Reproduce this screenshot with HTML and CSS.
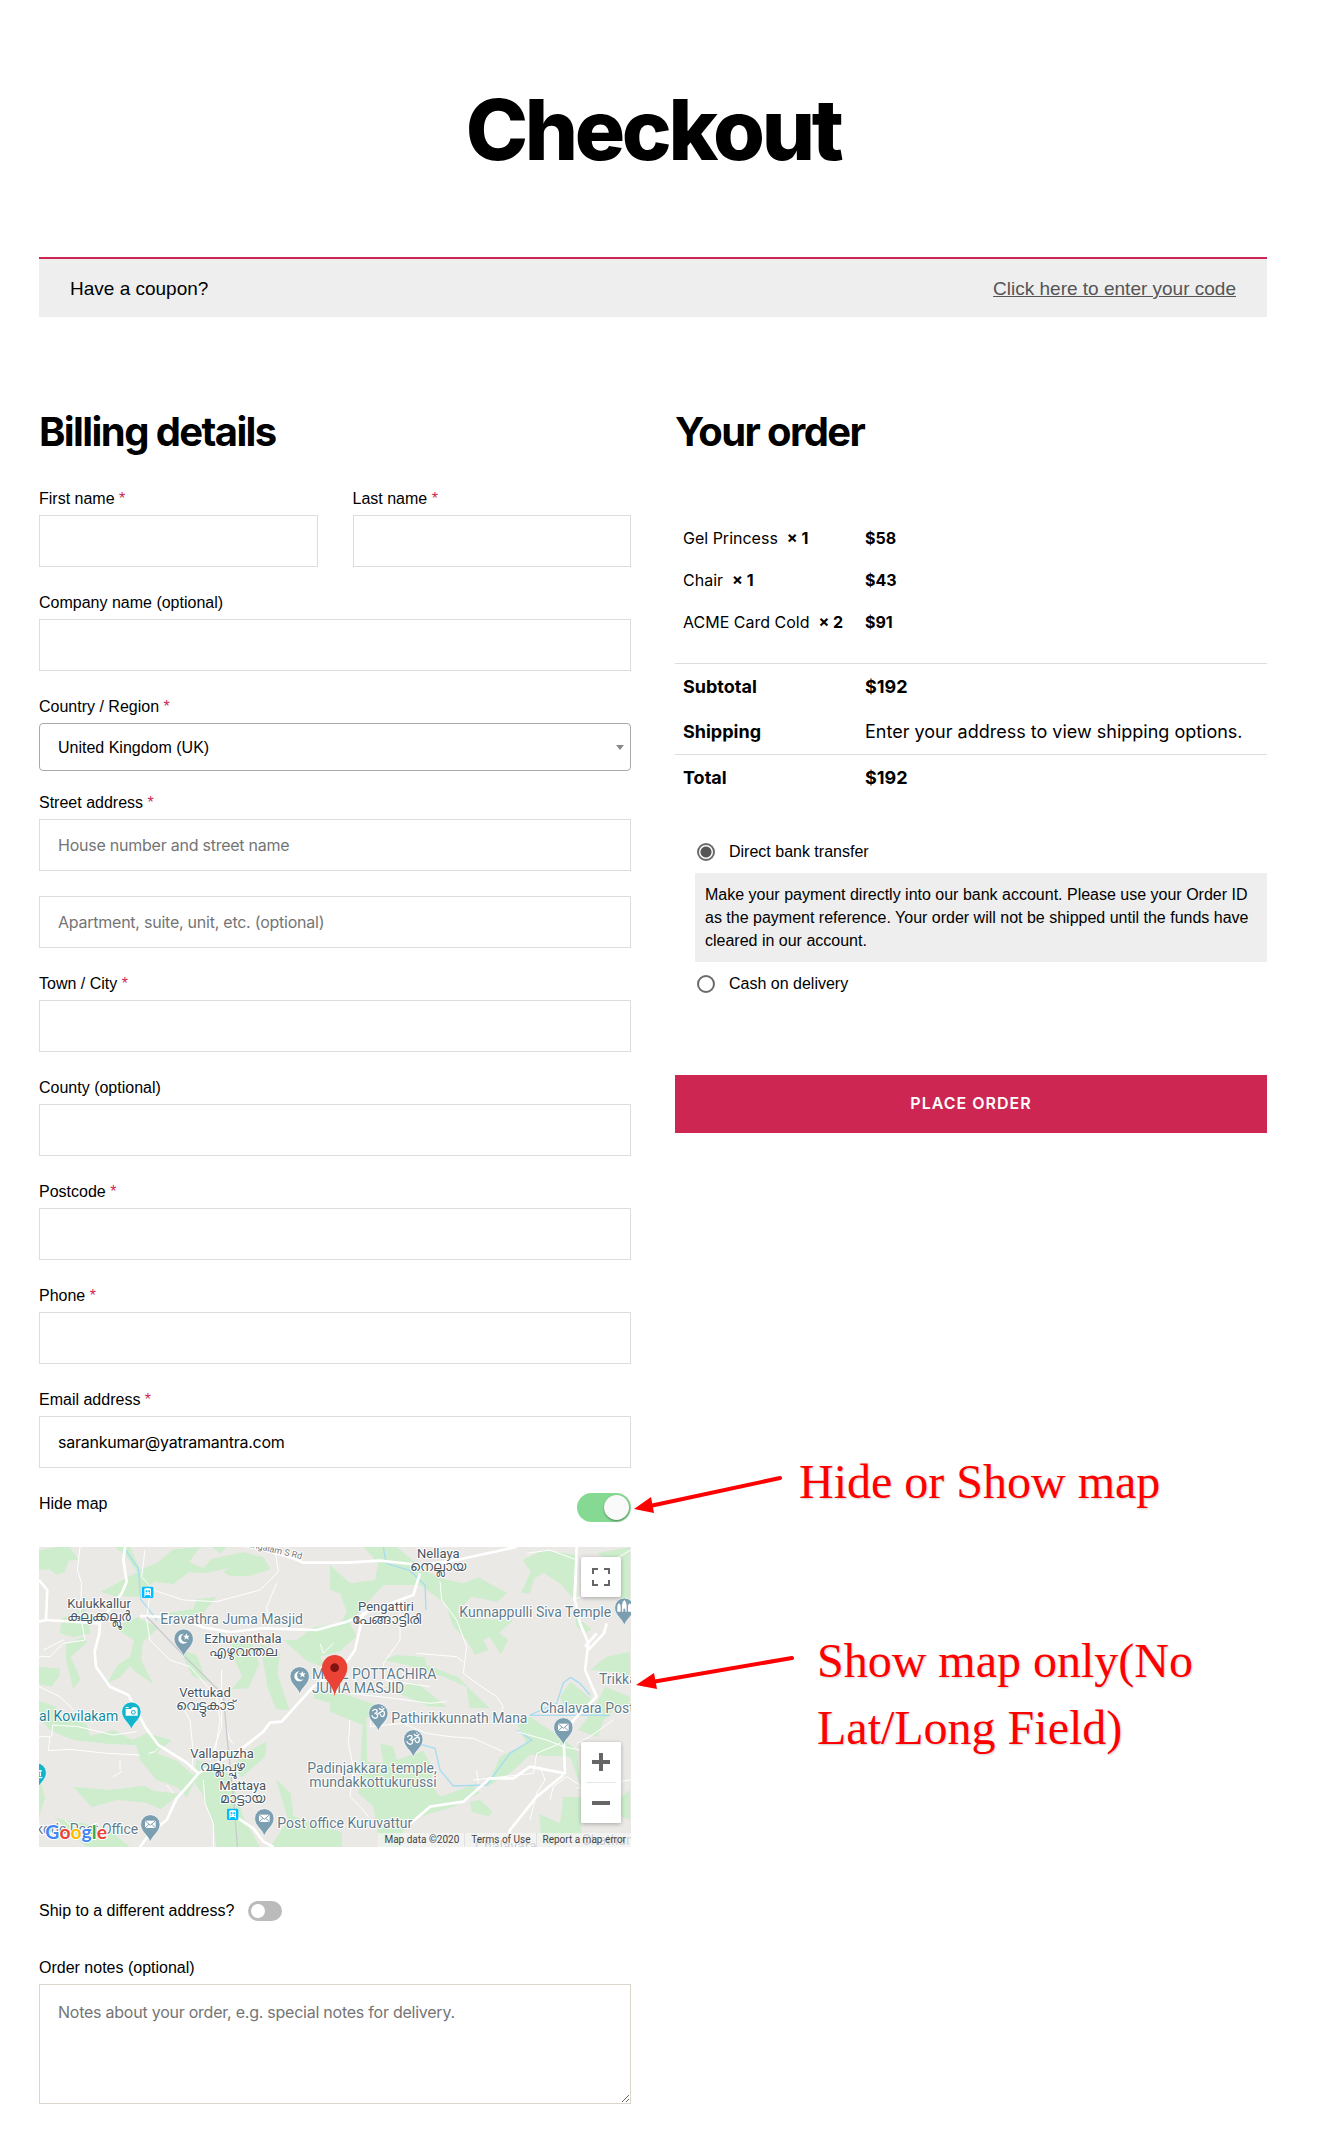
FILE: index.html
```html
<!DOCTYPE html>
<html lang="en">
<head>
<meta charset="utf-8">
<meta name="viewport" content="width=device-width, initial-scale=1">
<title>Checkout</title>
<link rel="stylesheet" href="styles.css">
</head>
<body>
<main class="page">
  <h1 class="page-title">Checkout</h1>

  <div class="coupon">
    <span>Have a coupon?</span>
    <a href="#coupon">Click here to enter your code</a>
  </div>

  <form class="checkout">
    <section class="billing">
      <h2 class="section-title">Billing details</h2>

      <div class="field-row">
        <div class="field">
          <label for="first">First name <abbr class="req">*</abbr></label>
          <input class="box" id="first" type="text">
        </div>
        <div class="field">
          <label for="last">Last name <abbr class="req">*</abbr></label>
          <input class="box" id="last" type="text">
        </div>
      </div>
      <div class="field">
        <label for="company">Company name (optional)</label>
        <input class="box" id="company" type="text">
      </div>
      <div class="field field-select">
        <label for="country">Country / Region <abbr class="req">*</abbr></label>
        <div class="select-wrap">
          <select class="select" id="country"><option>United Kingdom (UK)</option></select>
        </div>
      </div>
      <div class="field field-street">
        <label for="street">Street address <abbr class="req">*</abbr></label>
        <input class="box" id="street" type="text" placeholder="House number and street name">
      </div>
      <div class="field">
        <input class="box" id="unit" type="text" aria-label="Apartment" placeholder="Apartment, suite, unit, etc. (optional)">
      </div>
      <div class="field">
        <label for="town">Town / City <abbr class="req">*</abbr></label>
        <input class="box" id="town" type="text">
      </div>
      <div class="field">
        <label for="county">County (optional)</label>
        <input class="box" id="county" type="text">
      </div>
      <div class="field">
        <label for="postcode">Postcode <abbr class="req">*</abbr></label>
        <input class="box" id="postcode" type="text">
      </div>
      <div class="field">
        <label for="phone">Phone <abbr class="req">*</abbr></label>
        <input class="box" id="phone" type="tel">
      </div>
      <div class="field">
        <label for="email">Email address <abbr class="req">*</abbr></label>
        <input class="box" id="email" type="email" value="sarankumar@yatramantra.com">
      </div>

      <div class="map-toggle">
        <label for="hide-map">Hide map</label>
        <input class="switch switch-large" id="hide-map" type="checkbox" checked>
        <div class="note note-toggle">
          <svg class="arrow" width="160" height="48" viewBox="0 0 160 48" aria-hidden="true">
            <path d="M149 11 19 39" stroke="#f00" stroke-width="4" stroke-linecap="round"/>
            <path d="M3 42 20 30 23 46z" fill="#f00"/>
          </svg>
          <p>Hide or Show map</p>
        </div>
      </div>

      <div class="map-area">
        <div class="map">
          <svg class="map-art" viewBox="27 21 1776 900" preserveAspectRatio="xMidYMid slice" role="img" aria-label="Map">
            <defs>
              <path id="pin" d="M0 55C-4 34-29 24-29 0A29 29 0 0 1 29 0C29 24 4 34 0 55z"/>
              <g id="mail"><path d="M-16-11H16V11H-16z" fill="#fff"/><path d="M-16-11 0 3 16-11M-16 11-4 0M16 11 4 0" fill="none" stroke="#7b9eb0" stroke-width="3"/></g>
              <g id="moon"><path d="M3-15A15 15 0 1 0 14 9 12 12 0 1 1 3-15z" fill="#fff"/><path d="m11-16 3 7 7 0-5 5 2 7-7-4-6 4 2-7-6-5h7z" fill="#fff"/></g>
              <g id="om" fill="none" stroke="#fff" stroke-width="4" stroke-linecap="round"><path d="M-17-8C-10-16 0-10-5-3-7 0-10 0-12 0-6 0 0 4-3 11-7 18-17 14-19 7M-3 3C4-3 8-3 12-7 20-9 20 8 13 10 8 11 7 6 6 3M3-15C6-10 13-10 17-15"/><path d="M11-20v1"/></g>
              <g id="train"><rect x="-17" y="-17" width="34" height="34" rx="4" fill="#0bf"/><path d="M-10-11Q0-15 10-11V8H-10z" fill="#fff"/><path d="M-6-6H-1V0H-6zM2-6H7V0H2zM-6 3h3v2h-3zM4 3h3v2H4z" fill="#0bf"/><path d="M-7 8-10 13M7 8l3 5" stroke="#fff" stroke-width="3"/></g>
            </defs>
            <path fill="#eae9e6" d="M0 0H1830V950H0z"/>
            <g fill="#ceedcd">
              <path d="M27 32 75 21H118L145 58 116 62 104 96 80 104 58 88 27 90z"/>
              <path d="M255 21H300L330 90 380 70 430 28 510 21 478 66 520 84 545 56 640 37 700 52 722 88 660 108 600 108 578 95 600 84 520 100 478 96 430 132 372 125 345 150 330 170 250 168 213 155 322 97 290 50z"/>
              <path d="M545 21H590L570 40zM500 178 560 170 520 218 540 240 480 240 395 222 490 206zM95 235 165 205 182 280 130 292 90 280zM108 312 160 290 172 305 122 352 152 418 130 446 108 360z"/>
              <path d="M322 232 385 265 338 305 334 362 370 432 315 395 300 378 270 412 232 430 262 376 300 350 312 300 250 262z"/>
              <path d="M27 380 90 386 88 408 65 440 27 432zM450 330 500 345 520 400 542 428 488 408zM600 290 665 310 688 372 655 445 605 448 636 408 610 350zM690 310 750 340 742 400 778 510 738 508 712 440zM760 300 800 300 850 262 935 250 935 332 870 350 890 385 830 362z"/>
              <path d="M860 440 935 460 1040 495 1030 540 940 500 850 475zM27 482 80 502 76 540 128 535 170 552 180 588 250 570 308 600 350 580 425 600 380 640 440 662 500 714 470 772 440 740 380 720 330 660 318 615 240 612 130 600 62 572 27 530z"/>
              <path d="M130 740 240 750 345 737 370 752 448 762 392 808 350 788 260 780 185 802zM500 660 590 690 618 760 640 832 690 921H560L550 850 515 760 490 722zM640 640 710 605 706 650 635 712 605 680zM738 718 782 760 790 828 850 850 935 876V921H720L775 840zM27 702 45 775 27 830zM78 835 170 852 240 872 300 921H170L120 880z"/>
            </g>
            <g fill="#ceedcd" transform="translate(900 0)">
              <path d="M0 75 60 130 135 120 145 70 100 21H200L290 95 330 115 400 130 445 112 532 160 500 185 425 170 380 215 430 236 550 240 508 278 535 300 512 342 478 290 460 300 475 330 435 344 408 298 370 262 345 190 270 135 160 135 120 180 60 250 80 290 30 332 0 310 50 215 30 160 0 150z"/>
              <path d="M578 60 640 30 740 45 742 190 690 130 640 98 612 116 600 160 574 158 602 95zM735 228 785 268 765 280 740 260zM800 40 900 21V190L855 165 870 80zM780 390 830 350 900 335V410L850 395zM825 440 900 470V500L850 510 818 545 805 592 745 570 790 510zM690 470 722 425 785 478 750 512 705 515z"/>
              <path d="M160 360 200 345 285 352 290 375 385 412 440 468 480 505 418 503 410 440 340 410 300 398 220 372zM165 442 262 430 300 460 350 500 298 500zM0 470 108 500 112 665 160 670 150 610 190 620 200 660 280 632 312 690 300 730 330 770 430 735 448 760 370 800 270 830 220 870 210 921H150L130 800 85 760 98 555 0 515z"/>
              <path d="M560 548 600 530 690 590 740 630 752 740 720 650 600 645 540 700 470 740 510 650 590 610zM420 785 450 780 486 812 478 830 425 815zM628 822 690 850 700 770 755 772V880L690 890 660 921 632 880zM850 790 900 750V840L875 830z"/>
            </g>
            <g fill="none" stroke="#a8dcf0" stroke-width="4">
              <path d="M280 21 325 85 332 178 350 200 380 240M1060 21 1068 70 1140 92 1185 135 1188 210M1500 525 1580 490 1600 428 1622 412 1650 430 1680 465M1460 570 1505 600 1440 640 1370 735 1270 738 1230 690 1215 625 1160 610M1500 526H1740"/>
            </g>
            <g fill="none" stroke="#fff" stroke-width="3">
              <path d="M150 21 142 90 155 130 150 220 165 300 100 310 60 350 27 350M27 440 90 470 130 510M27 590H60L55 632 120 628 230 640 330 645M65 590 68 555 145 560 250 585 320 575M345 30 335 110 370 150 460 180 560 185 690 150 745 95 735 30M360 155 350 240 360 300 420 360 480 380 560 470 570 540 555 640M575 390V560L540 660M450 490 480 540 490 640 485 690M40 330 100 300M250 710 275 695M270 660V690M355 640 375 635 385 625M430 760 410 735M520 720 525 790 550 850V921M590 570 600 600 610 610M740 130 710 200 715 260M870 310 880 340 910 310M105 840 120 855 200 870"/>
              <path d="M900 420 960 460 1090 475 1200 490 1250 485M960 540 955 610 970 680 960 770 1000 810 1015 830M1030 500 1020 560 1120 550 1190 580 1260 590 1330 595 1420 635M1230 125 1235 180 1280 240 1310 320 1300 400 1340 430 1400 470 1420 500 1410 530M1110 220 1110 300 1060 370 1065 420 1200 440M1160 340 1280 350 1300 365M1490 40 1560 30 1640 60M1640 21 1630 180 1700 150M1460 575 1550 600 1600 620 1650 630M1530 680 1545 720 1520 760 1500 840M1560 780 1570 740 1610 710 1650 735M1590 610 1520 640 1510 700 1330 720M1340 690 1345 730M1640 610 1680 590 1750 540M1640 745 1720 730 1803 720M1700 100 1750 60 1803 30"/>
            </g>
            <g fill="none" stroke="#fff" stroke-width="8" stroke-linejoin="round">
              <path d="M285 21 280 60 290 125 275 160 210 245 208 280 194 335 198 380 240 440 295 465 345 560 385 615 470 668 505 700 480 730 440 775 410 840 360 880 330 921M27 120 52 150 48 240 210 250M48 240 27 245M330 228 440 232 520 262 600 276 700 265 860 270 950 245 1010 220M505 700 640 622 700 575 720 548 755 545 850 440 940 380 975 330 1000 220 1030 210 1150 165 1170 100M670 21 790 55 820 68 950 68 1050 62 1170 75 1280 60 1460 21M620 832 670 865 700 905 730 921"/>
              <path d="M1640 21 1635 180 1650 250 1675 310 1665 390 1700 470 1640 530 1600 580 1605 700 1500 680 1450 715 1380 715 1300 785 1200 800 1130 860M1730 250 1722 280 1670 335M1600 705 1520 770 1440 870 1430 921M1665 320 1700 280"/>
            </g>
            <path d="M350 230 460 345 580 465 592 600 612 790 622 921" fill="none" stroke="#c9cbce" stroke-width="4"/>

            <g fill="#7b9eb0" stroke="#fff" stroke-width="2">
              <use href="#pin" x="461" y="296"/><use href="#pin" x="809" y="409"/><use href="#pin" x="361" y="853"/><use href="#pin" x="703" y="835"/>
              <use href="#pin" x="1045" y="520"/><use href="#pin" x="1150" y="598"/><use href="#pin" x="1600" y="562"/><use href="#pin" x="1783" y="203"/>
            </g>
            <g fill="#12b5cb" stroke="#fff" stroke-width="2"><use href="#pin" x="304" y="515"/><use href="#pin" x="20" y="698"/></g>
            <use href="#moon" x="458" y="296"/><use href="#moon" x="806" y="409"/>
            <use href="#mail" x="361" y="853"/><use href="#mail" x="703" y="835"/><use href="#mail" x="1600" y="562"/>
            <use href="#om" x="1045" y="520"/><use href="#om" x="1150" y="598"/>
            <path d="M287 507h16l4-5h12l4 5v20h-36zM287 501h9v3h-9z" fill="#fff"/><circle cx="310" cy="517" r="7" fill="#12b5cb"/><circle cx="310" cy="517" r="4" fill="#fff"/>
            <path d="M27 690h8v5h-8zM29 697h4v12h-4zM27 711h10v4H27z" fill="#fff"/>
            <path d="M1762 215V200Q1762 193 1767 190 1772 193 1772 200V215zM1776 215V195Q1776 186 1783 180 1790 186 1790 195V215H1786V206H1780V215zM1794 215V200Q1794 193 1799 190 1804 193 1804 200V215z" fill="#fff"/>
            <use href="#train" x="353" y="157"/><use href="#train" x="608" y="823"/>

            <g class="place">
              <text x="207" y="203">Kulukkallur</text><text class="ml" x="207" y="242">കുലുക്കല്ലൂർ</text>
              <text x="639" y="308">Ezhuvanthala</text><text class="ml" x="639" y="348">എഴുവന്തല</text>
              <text x="525" y="471">Vettukad</text><text class="ml" x="525" y="510">വെട്ടുകാട്</text>
              <text x="576" y="654">Vallapuzha</text><text class="ml" x="576" y="693">വല്ലപ്പുഴ</text>
              <text x="638" y="750">Mattaya</text><text class="ml" x="638" y="789">മാട്ടായ</text>
              <text x="1225" y="54">Nellaya</text><text class="ml" x="1225" y="93">നെല്ലായ</text>
              <text x="1068" y="212">Pengattiri</text><text class="ml" x="1068" y="251">പേങ്ങാട്ടിരി</text>
            </g>
            <g class="poi">
              <text x="391" y="252">Eravathra Juma Masjid</text>
              <text x="846" y="417">MALL POTTACHIRA</text><text x="846" y="459">JUMA MASJID</text>
              <text x="1084" y="549">Pathirikkunnath Mana</text>
              <text x="832" y="700">Padinjakkara temple,</text><text x="838" y="741">mundakkottukurussi</text>
              <text x="742" y="864">Post office Kuruvattur</text>
              <text x="1288" y="231">Kunnappulli Siva Temple</text>
              <text x="1707" y="432">Trikkadeeri</text><text x="1530" y="519">Chalavara Post</text>
              <text x="18" y="881">kode Post Office</text>
              <text class="teal" x="6" y="542">kal Kovilakam</text>
              <text class="road" x="630" y="15" transform="rotate(13 630 15)">Mangalam S Rd</text>
              <text x="1335" y="934">Chalavara</text><text x="1655" y="914">Chathan</text>
            </g>
            <path d="M914 468C910 434 876 416 876 383A38 38 0 0 1 952 383C952 416 918 434 914 468z" fill="#ea4335"/><circle cx="914" cy="383" r="13" fill="#811411"/>
            <text class="logo" x="46" y="897"><tspan fill="#4285f4">G</tspan><tspan fill="#ea4335">o</tspan><tspan fill="#fbbc04">o</tspan><tspan fill="#4285f4">g</tspan><tspan fill="#34a853">l</tspan><tspan fill="#ea4335">e</tspan></text>
          </svg>
          <button class="map-button map-full" type="button" aria-label="Full screen">
            <svg width="18" height="18" viewBox="0 0 18 18" fill="none" stroke="#666" stroke-width="2"><path d="M1 6V1H6M12 1H17V6M17 12V17H12M6 17H1V12"/></svg>
          </button>
          <div class="zoom">
            <button class="map-button" type="button" aria-label="Zoom in"><svg width="18" height="18" viewBox="0 0 18 18"><path d="M7 0H11V7H18V11H11V18H7V11H0V7H7z" fill="#666"/></svg></button>
            <button class="map-button" type="button" aria-label="Zoom out"><svg width="18" height="18" viewBox="0 0 18 18"><path d="M0 7H18V11H0z" fill="#666"/></svg></button>
          </div>
          <div class="credits">
            <span>Map data ©2020</span><a href="#terms">Terms of Use</a><a href="#report">Report a map error</a>
          </div>
        </div>
        <div class="note note-map">
          <svg class="arrow" width="164" height="48" viewBox="0 0 164 48" aria-hidden="true">
            <path d="M161 12 21 36" stroke="#f00" stroke-width="4" stroke-linecap="round"/>
            <path d="M5 39 23 27 26 43z" fill="#f00"/>
          </svg>
          <p>Show map only(No<br>Lat/Long Field)</p>
        </div>
      </div>

      <div class="ship">
        <label for="ship">Ship to a different address?</label>
        <input class="switch" id="ship" type="checkbox">
      </div>

      <div class="field">
        <label for="notes">Order notes (optional)</label>
        <textarea class="box box-notes" id="notes" placeholder="Notes about your order, e.g. special notes for delivery."></textarea>
      </div>
    </section>

    <section class="order">
      <h2 class="section-title">Your order</h2>
      <table class="summary">
        <tbody>
          <tr><td>Gel Princess&nbsp; <strong>× 1</strong></td><td><strong>$58</strong></td></tr>
          <tr><td>Chair&nbsp; <strong>× 1</strong></td><td><strong>$43</strong></td></tr>
          <tr><td>ACME Card Cold&nbsp; <strong>× 2</strong></td><td><strong>$91</strong></td></tr>
        </tbody>
        <tfoot>
          <tr class="ruled"><th scope="row">Subtotal</th><td><strong>$192</strong></td></tr>
          <tr><th scope="row">Shipping</th><td>Enter your address to view shipping options.</td></tr>
          <tr class="ruled"><th scope="row">Total</th><td><strong>$192</strong></td></tr>
        </tfoot>
      </table>

      <div class="payment">
        <div class="method">
          <input class="radio" type="radio" name="pay" id="bank" checked>
          <label for="bank">Direct bank transfer</label>
        </div>
        <p class="method-info">Make your payment directly into our bank account. Please use your Order ID as the payment reference. Your order will not be shipped until the funds have cleared in our account.</p>
        <div class="method">
          <input class="radio" type="radio" name="pay" id="cash">
          <label for="cash">Cash on delivery</label>
        </div>
      </div>
      <button class="place-order" type="submit">PLACE ORDER</button>
    </section>
  </form>
</main>
</body>
</html>
```

FILE: styles.css
```css
* { box-sizing: border-box; }

body {
  margin: 0;
  background: #fff;
  color: #000;
  font-family: "Liberation Sans", Arial, sans-serif;
  font-size: 16px;
  line-height: 24px;
}

p { margin: 0; }

.page { padding: 88px 61px 52px 39px; }

.page-title {
  margin: 0 0 85px;
  font: 800 84px/84px Inter, sans-serif;
  letter-spacing: -0.04em;
  text-align: center;
}

.coupon {
  display: flex;
  justify-content: space-between;
  align-items: center;
  min-height: 60px;
  padding: 2px 31px 0;
  border-top: 2px solid #cd2653;
  background: #eee;
  font-size: 19px;
}
.coupon a { color: #555; }

.checkout {
  display: grid;
  grid-template-columns: 1fr 1fr;
  column-gap: 44px;
  margin-top: 91px;
}

.section-title {
  margin: 0 0 31px;
  font: 700 40px/48px Inter, sans-serif;
  letter-spacing: -0.04em;
}

/* form fields */
.field-row {
  display: grid;
  grid-template-columns: 1fr 1fr;
  column-gap: 35px;
}
.field {
  display: flex;
  flex-direction: column;
  gap: 4px;
  margin-bottom: 24px;
}
.field-select { margin-bottom: 20px; }
.field-street { margin-bottom: 25px; }
.field:last-child { margin-bottom: 0; }

.req { color: #cd2653; }

.box {
  width: 100%;
  height: 52px;
  padding: 0 18px;
  border: 1px solid #ddd;
  border-radius: 0;
  background: #fff;
  color: #000;
  font: 400 16px/24px Inter, sans-serif;
  letter-spacing: -0.015em;
}
.box::placeholder { color: #757575; opacity: 1; }
.box-notes {
  display: block;
  height: 120px;
  padding: 15px 18px;
  border-color: #dcd7ca;
}

.select-wrap { position: relative; }
.select-wrap::after {
  content: "";
  position: absolute;
  right: 7px;
  top: 22px;
  border: 4px solid transparent;
  border-top: 5px solid #888;
  border-bottom: 0;
}
.select {
  display: block;
  width: 100%;
  height: 48px;
  padding: 2px 18px 0;
  border: 1px solid #aaa;
  border-radius: 4px;
  background: #fff;
  color: #000;
  font: inherit;
  appearance: none;
}

/* switches */
.switch {
  appearance: none;
  display: flex;
  width: 34px;
  height: 20px;
  margin: 0;
  padding: 3px;
  border-radius: 10px;
  background: #bbb;
}
.switch::before {
  content: "";
  width: 14px;
  height: 14px;
  border-radius: 50%;
  background: #fff;
}
.switch-large {
  width: 54px;
  height: 29px;
  padding: 2px;
  border-radius: 15px;
  background: #86d993;
}
.switch-large:checked { justify-content: flex-end; }
.switch-large::before {
  width: 25px;
  height: 25px;
  background: #fafafa;
  box-shadow: 0 1px 2px rgba(0, 0, 0, .4);
}

.map-toggle {
  position: relative;
  display: flex;
  justify-content: space-between;
  align-items: flex-end;
  height: 30px;
  margin-bottom: 25px;
}
.map-toggle label { align-self: flex-start; }

/* red call-outs beside the map */
.note {
  position: absolute;
  left: 100%;
  display: flex;
  color: #f00;
  font: 48px/67px "Liberation Serif", serif;
  white-space: nowrap;
  text-shadow: 1px 1px 2px rgba(0, 0, 0, .2);
}
.note-toggle { top: -44px; gap: 8px; }
.note-map { top: 80px; gap: 22px; }
.arrow { margin-top: 19px; fill: none; }

/* map */
.map-area { position: relative; }
.map {
  position: relative;
  height: 300px;
  overflow: hidden;
}
.map-art {
  display: block;
  width: 100%;
  height: 100%;
  font-family: Roboto, sans-serif;
}
.map-art text {
  paint-order: stroke;
  stroke: #fff;
  stroke-width: 6px;
  stroke-linejoin: round;
}
.place { fill: #4a5560; font-size: 39px; text-anchor: middle; }
.place .ml { font-size: 43px; }
.poi { fill: #5f7c8c; font-size: 42px; }
.poi .teal { fill: #12889a; }
.poi .road { fill: #777; font-size: 27px; }
.map-art .logo {
  font-family: Lato, sans-serif;
  font-size: 58px;
  font-weight: 700;
}

.map-button {
  display: flex;
  justify-content: center;
  align-items: center;
  width: 40px;
  height: 40px;
  padding: 0;
  border: 0;
  border-radius: 2px;
  background: #fff;
}
.map-full {
  position: absolute;
  top: 10px;
  right: 10px;
  box-shadow: 0 1px 4px rgba(0, 0, 0, .3);
}
.zoom {
  position: absolute;
  right: 10px;
  bottom: 24px;
  border-radius: 2px;
  background: #fff;
  box-shadow: 0 1px 4px rgba(0, 0, 0, .3);
}
.zoom .map-button + .map-button::before {
  content: "";
  position: absolute;
  top: 40px;
  width: 30px;
  height: 1px;
  background: #e6e6e6;
}
.zoom .map-button + .map-button { margin-top: 1px; }
.credits {
  position: absolute;
  right: 0;
  bottom: 0;
  display: flex;
  background: rgba(245, 245, 245, .7);
  color: #444;
  font: 10px/14px Roboto, sans-serif;
}
.credits > * { padding: 0 5px 0 6px; color: #444; text-decoration: none; }
.credits > * + * { border-left: 1px solid #e0e0e0; }

.ship {
  display: flex;
  align-items: center;
  gap: 14px;
  height: 24px;
  margin: 52px 0 33px;
}

/* order summary */
.summary {
  width: 100%;
  margin-top: 61px;
  border-spacing: 0;
  font-family: Inter, sans-serif;
  table-layout: fixed;
}
.summary td,
.summary th { height: 42px; padding: 0; text-align: left; }
.summary tr > :first-child { width: 190px; padding-left: 8px; white-space: nowrap; }
.summary tbody::after { content: ""; display: block; height: 20px; }
.summary tfoot { font-size: 18px; }
.summary tfoot td,
.summary tfoot th { height: 45px; font-weight: 400; white-space: nowrap; }
.summary tfoot th,
.summary strong { font-weight: 700; }
.summary .ruled > * { height: 46px; border-top: 1px solid #ddd; }

.payment { margin-top: 40px; padding-left: 20px; }
.method {
  display: flex;
  align-items: center;
  gap: 14px;
  padding-left: 2px;
}
.radio {
  appearance: none;
  width: 18px;
  height: 18px;
  margin: 0;
  border: 2px solid #6b6b6b;
  border-radius: 50%;
  background: #fff;
}
.radio:checked { background: radial-gradient(circle, #555 5px, #fff 6px); }
.method-info {
  margin: 9px 0 10px;
  padding: 10px;
  background: #eee;
  line-height: 23px;
}

.place-order {
  display: block;
  width: 100%;
  height: 58px;
  margin-top: 79px;
  padding: 0 0 2px;
  border: 0;
  background: #cd2653;
  color: #fff;
  font: 600 16px/24px Inter, sans-serif;
  letter-spacing: 1px;
}
```
